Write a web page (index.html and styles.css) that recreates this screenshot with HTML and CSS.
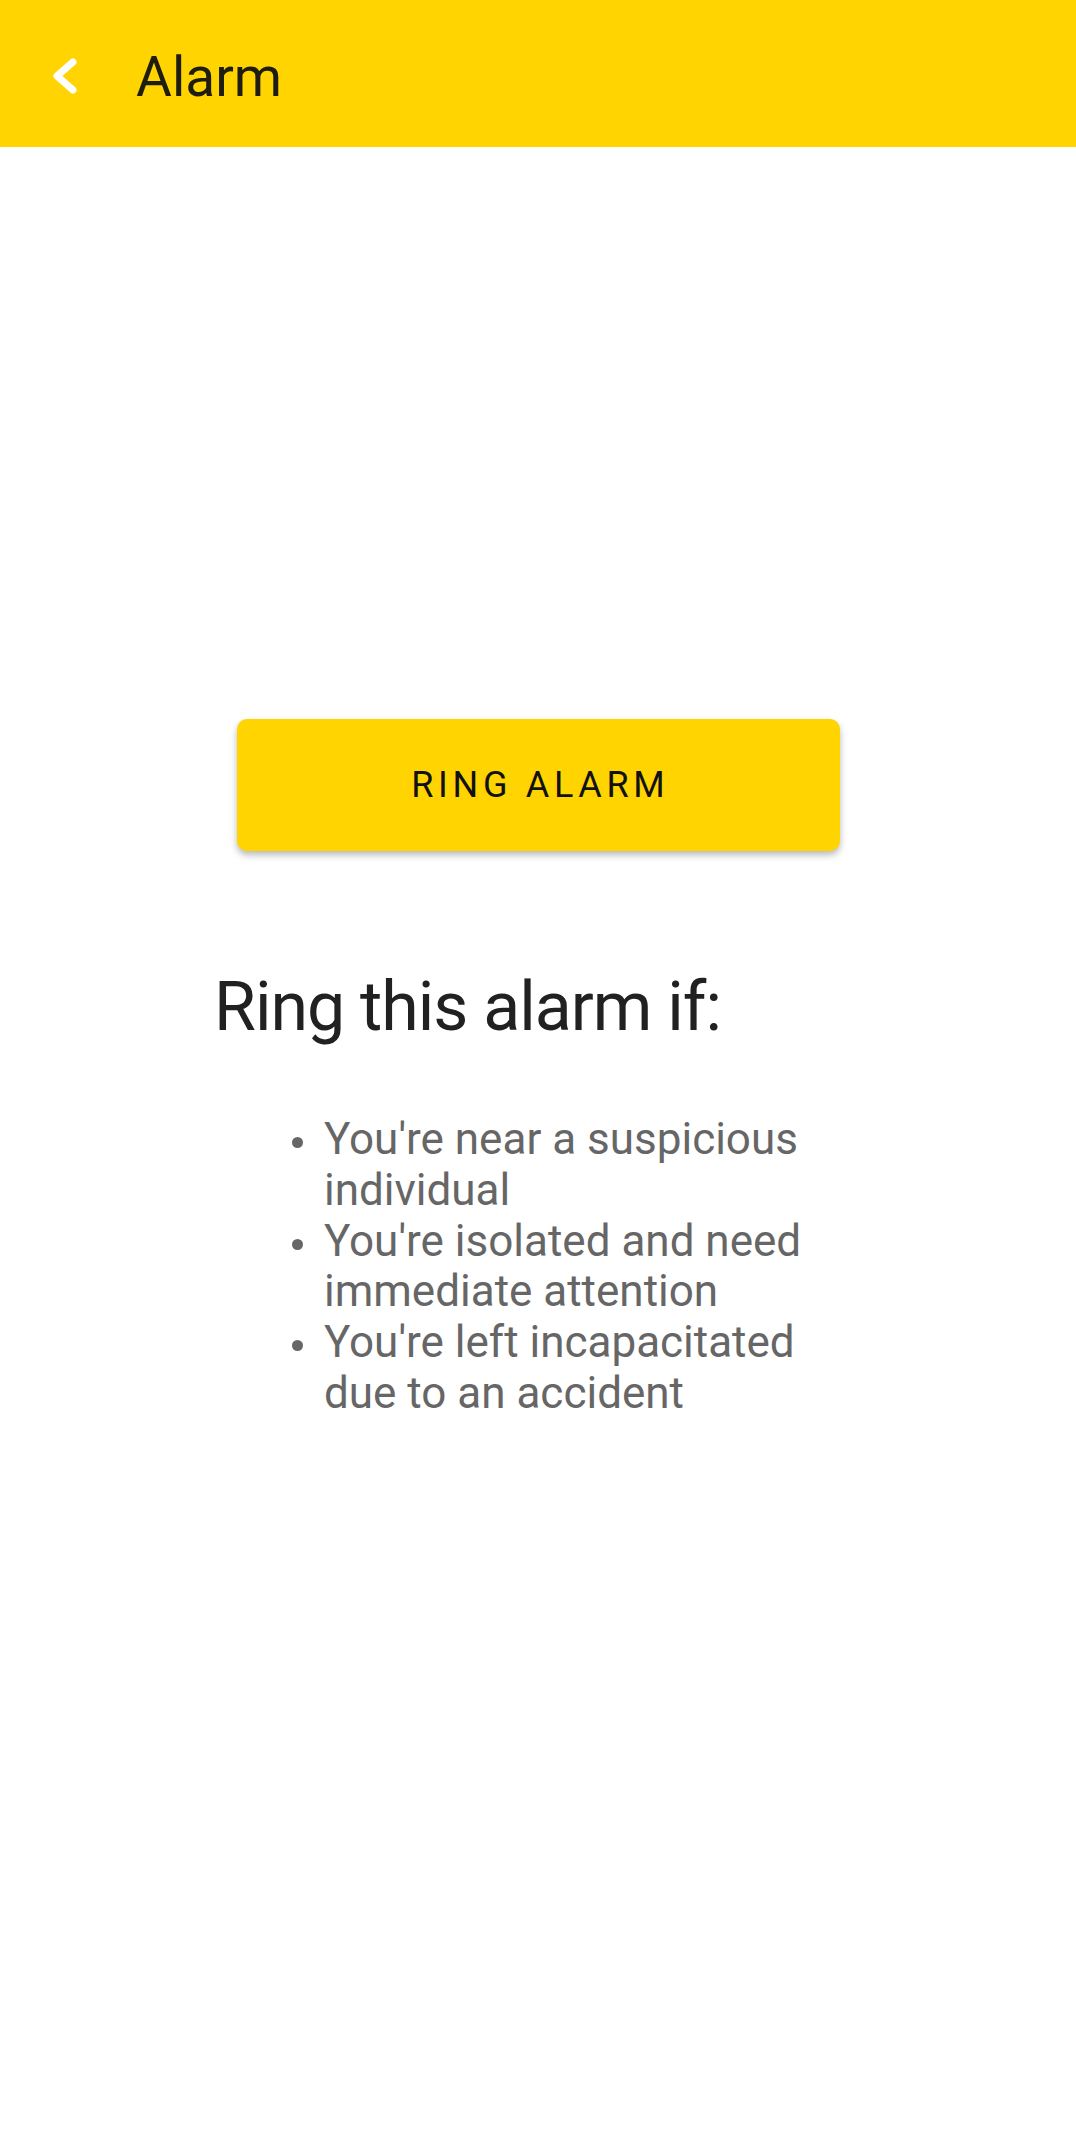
FILE: index.html
```html
<!DOCTYPE html>
<html lang="en">
<head>
<meta charset="utf-8">
<title>Alarm</title>
<link rel="stylesheet" href="styles.css">
</head>
<body>
<header class="toolbar">
  <button class="back" aria-label="Back">
    <svg width="30" height="42" viewBox="0 0 30 42">
      <polyline points="21,7 5,21 21,35" fill="none" stroke="#ffffff" stroke-width="7" stroke-linecap="round" stroke-linejoin="round"/>
    </svg>
  </button>
  <h1 class="title">Alarm</h1>
</header>
<main class="content">
  <button class="ring-btn">RING ALARM</button>
  <section class="info">
    <h2 class="info-heading">Ring this alarm if:</h2>
    <ul class="info-list">
      <li>You're near a suspicious individual</li>
      <li>You're isolated and need immediate attention</li>
      <li>You're left incapacitated due to an accident</li>
    </ul>
  </section>
</main>
</body>
</html>
```

FILE: styles.css
```css
html, body {
  margin: 0;
  padding: 0;
  background: #ffffff;
  font-family: Roboto, "Noto Sans", "Liberation Sans", sans-serif;
}

.toolbar {
  height: 147px;
  background: #ffd400;
  display: flex;
  align-items: center;
  box-sizing: border-box;
  padding-left: 52px;
}

.back {
  border: 0;
  background: transparent;
  padding: 0;
  width: 30px;
  height: 42px;
  display: flex;
  margin-top: 5px;
}

.title {
  margin: 0 0 0 54px;
  padding-top: 6px;
  font-size: 55px;
  font-weight: 400;
  color: #1f1d10;
  line-height: normal;
}

.content {
  display: flex;
  flex-direction: column;
  align-items: center;
  padding-top: 572px;
}

.ring-btn {
  width: 603px;
  height: 132px;
  border: 0;
  border-radius: 10px;
  background: #ffd400;
  box-shadow: 0 4px 7px rgba(0, 0, 0, 0.28);
  font-family: Roboto, "Liberation Sans", sans-serif;
  font-size: 36px;
  font-weight: 400;
  letter-spacing: 0.13em;
  text-indent: 0.13em;
  color: #111111;
  padding: 0;
}

.info {
  width: 654px;
  margin-top: 116px;
}

.info-heading {
  margin: 0;
  padding-left: 3px;
  font-size: 68px;
  font-weight: 400;
  letter-spacing: -1px;
  line-height: normal;
  color: #212121;
}

.info-list {
  list-style: none;
  margin: 67px 0 0 0;
  padding: 0 25px 0 81px;
  font-size: 44px;
  line-height: 50.8px;
  color: #666666;
}

.info-list li {
  display: flex;
}

.info-list li::before {
  content: "";
  flex: none;
  width: 11px;
  height: 11px;
  border-radius: 50%;
  background: #666666;
  margin-top: 23px;
  margin-right: 21px;
}
```
